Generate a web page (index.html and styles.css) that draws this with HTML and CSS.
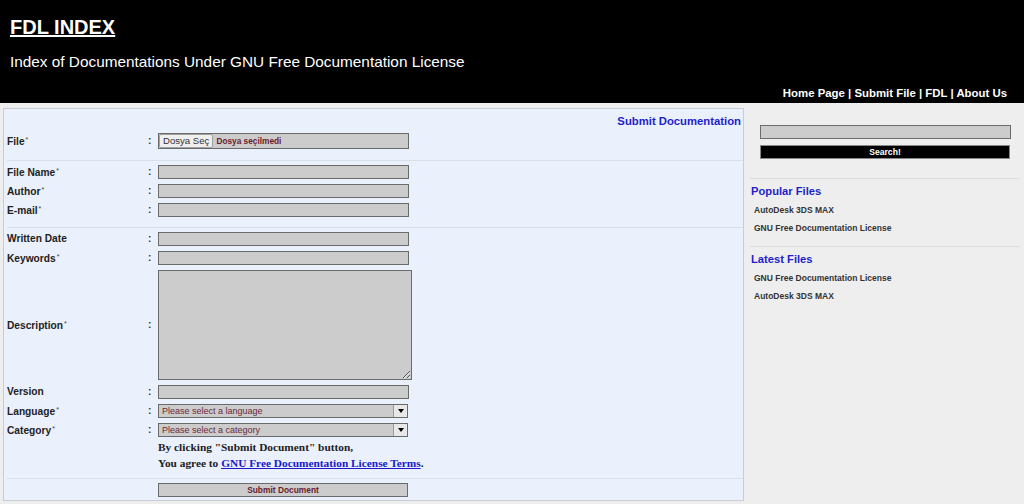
FILE: index.html
```html
<!DOCTYPE html>
<html lang="en">
<head>
<meta charset="utf-8">
<title>FDL INDEX - Submit Documentation</title>
<link rel="stylesheet" href="styles.css">
</head>
<body>
<header class="site-header">
  <h1 class="logo"><a href="#">FDL INDEX</a></h1>
  <p class="tagline">Index of Documentations Under GNU Free Documentation License</p>
  <nav class="topnav"><a href="#">Home Page</a> | <a href="#">Submit File</a> | <a href="#">FDL</a> | <a href="#">About Us</a></nav>
</header>
<div class="layout">
  <main class="panel">
    <h2 class="panel-title">Submit Documentation</h2>
    <form class="form">
      <div class="group">
        <div class="row">
          <label class="label">File<span class="req">*</span></label><span class="colon">:</span>
          <div class="filebox"><span class="filebtn">Dosya Seç</span><span class="filename">Dosya seçilmedi</span></div>
        </div>
      </div>
      <div class="group">
        <div class="row">
          <label class="label">File Name<span class="req">*</span></label><span class="colon">:</span>
          <input class="field" type="text">
        </div>
        <div class="row">
          <label class="label">Author<span class="req">*</span></label><span class="colon">:</span>
          <input class="field" type="text">
        </div>
        <div class="row">
          <label class="label">E-mail<span class="req">*</span></label><span class="colon">:</span>
          <input class="field" type="text">
        </div>
      </div>
      <div class="group group-main">
        <div class="row">
          <label class="label">Written Date</label><span class="colon">:</span>
          <input class="field" type="text">
        </div>
        <div class="row">
          <label class="label">Keywords<span class="req">*</span></label><span class="colon">:</span>
          <input class="field" type="text">
        </div>
        <div class="row">
          <label class="label">Description<span class="req">*</span></label><span class="colon">:</span>
          <textarea class="area"></textarea>
        </div>
        <div class="row">
          <label class="label">Version</label><span class="colon">:</span>
          <input class="field" type="text">
        </div>
        <div class="row">
          <label class="label">Language<span class="req">*</span></label><span class="colon">:</span>
          <div class="select"><span class="select-text">Please select a language</span><span class="select-arrow"><span class="tri"></span></span></div>
        </div>
        <div class="row">
          <label class="label">Category<span class="req">*</span></label><span class="colon">:</span>
          <div class="select"><span class="select-text">Please select a category</span><span class="select-arrow"><span class="tri"></span></span></div>
        </div>
        <div class="row note-row">
          <span></span><span></span>
          <p class="note">By clicking "Submit Document" button,<br>You agree to <a href="#">GNU Free Documentation License Terms</a>.</p>
        </div>
      </div>
      <div class="group group-last">
        <div class="row">
          <span></span><span></span>
          <button type="button" class="submit">Submit Document</button>
        </div>
      </div>
    </form>
  </main>
  <aside class="sidebar">
    <div class="search">
      <input class="search-input" type="text">
      <button type="button" class="search-btn">Search!</button>
    </div>
    <section class="side-block">
      <h3 class="side-title">Popular Files</h3>
      <ul class="side-list">
        <li><a href="#">AutoDesk 3DS MAX</a></li>
        <li><a href="#">GNU Free Documentation License</a></li>
      </ul>
    </section>
    <section class="side-block">
      <h3 class="side-title">Latest Files</h3>
      <ul class="side-list">
        <li><a href="#">GNU Free Documentation License</a></li>
        <li><a href="#">AutoDesk 3DS MAX</a></li>
      </ul>
    </section>
  </aside>
</div>
</body>
</html>
```
FILE: styles.css
```css
* { box-sizing: border-box; }
html, body { margin: 0; padding: 0; }
body {
  background: #eeeeee;
  font-family: "Liberation Sans", Arial, sans-serif;
  color: #222;
  width: 1024px;
  height: 504px;
  overflow: hidden;
}

/* Header */
.site-header {
  background: #000;
  color: #fff;
  height: 103px;
  padding: 15px 17px 0 10px;
}
.logo {
  margin: 0;
  font-size: 20px;
  line-height: 24px;
  font-weight: bold;
}
.logo a { color: #fff; text-decoration: underline; }
.tagline {
  margin: 14px 0 0;
  font-size: 15.35px;
  line-height: 18px;
}
.topnav {
  margin-top: 15px;
  text-align: right;
  font-size: 11.4px;
  line-height: 14px;
  font-weight: bold;
}
.topnav a { color: #fff; text-decoration: none; }

/* Layout */
.layout {
  display: flex;
  padding: 5px 0 0 3px;
}
.panel {
  width: 741px;
  background: #eaf0fc;
  border: 1px solid #c9ccd2;
  padding: 5px 0 0 3px;
}
.panel-title {
  margin: 0;
  text-align: right;
  padding-right: 2px;
  font-size: 11.3px;
  line-height: 14px;
  font-weight: bold;
  color: #1f1fcc;
}
.form { margin: 0; }
.group {
  display: flex;
  flex-direction: column;
  gap: 5px;
  padding: 5px 0 11px;
  border-bottom: 1px solid #dae0ea;
}
.group + .group { padding-top: 4px; padding-bottom: 10px; }
.group-main { padding-bottom: 7px !important; }
.group-last { border-bottom: 0; padding-bottom: 3px !important; }
.row {
  display: grid;
  grid-template-columns: 141px 10px auto;
  align-items: center;
}
.label {
  font-size: 10.2px;
  font-weight: bold;
  color: #222;
  line-height: 12px;
}
.req {
  font-size: 7px;
  font-weight: normal;
  vertical-align: 3px;
  margin-left: 1px;
  color: #444;
}
.colon {
  font-size: 10px;
  font-weight: bold;
  color: #333;
  line-height: 12px;
}
.field {
  display: block;
  width: 251px;
  height: 14px;
  margin: 0;
  padding: 0;
  background: #cccccc;
  border: 1px solid #6b6b6b;
  outline: none;
}
.filebox {
  display: flex;
  align-items: center;
  width: 251px;
  height: 16px;
  background: #cccccc;
  border: 1px solid #6b6b6b;
  padding-left: 0;
}
.filebtn {
  flex-shrink: 0;
  white-space: nowrap;
  height: 14px;
  padding: 0 3px 0 3px;
  background: #efefef;
  border: 1px solid #a0a0a0;
  border-radius: 2px;
  font-size: 9.6px;
  line-height: 12px;
  color: #333;
}
.filename {
  white-space: nowrap;
  margin-left: 3px;
  font-size: 8.3px;
  font-weight: bold;
  color: #6b1a2b;
}
.area {
  display: block;
  width: 254px;
  height: 110px;
  margin: 0;
  padding: 0;
  background: #cccccc;
  border: 1px solid #6b6b6b;
  outline: none;
  resize: both;
}
.select {
  display: flex;
  align-items: stretch;
  width: 250px;
  height: 14px;
  background: #cccccc;
  border: 1px solid #6b6b6b;
}
.select-text {
  flex: 1;
  padding-left: 3px;
  font-size: 9px;
  line-height: 12px;
  color: #6b2a3a;
}
.select-arrow {
  width: 14px;
  background: #e8e8e8;
  border-left: 1px solid #9a9a9a;
  display: flex;
  align-items: center;
  justify-content: center;
}
.tri {
  width: 0;
  height: 0;
  border-left: 3.5px solid transparent;
  border-right: 3.5px solid transparent;
  border-top: 4px solid #000;
}
.note-row { margin-top: -3px; }
.note {
  margin: 0;
  font-family: "Liberation Serif", "Times New Roman", serif;
  font-weight: bold;
  font-size: 11.35px;
  line-height: 16px;
  color: #222;
}
.note a { color: #1a1acc; text-decoration: underline; }
.submit {
  width: 250px;
  height: 14px;
  margin: 0;
  padding: 0;
  background: #cccccc;
  border: 1px solid #6b6b6b;
  font-family: "Liberation Sans", Arial, sans-serif;
  font-size: 8.4px;
  font-weight: bold;
  line-height: 12px;
  color: #6b1a2b;
}

/* Sidebar */
.sidebar {
  flex: 1;
  padding: 17px 4px 0 6px;
}
.search {
  display: flex;
  flex-direction: column;
  gap: 6px;
  padding: 0 0 19px 10px;
  border-bottom: 1px solid #dddddd;
}
.search-input {
  width: 251px;
  height: 14px;
  margin: 0;
  padding: 0;
  background: #cccccc;
  border: 1px solid #6b6b6b;
  outline: none;
}
.search-btn {
  width: 250px;
  height: 14px;
  margin: 0;
  padding: 0;
  background: #000;
  border: 1px solid #888;
  color: #fff;
  font-family: "Liberation Sans", Arial, sans-serif;
  font-size: 8.6px;
  font-weight: bold;
  line-height: 12px;
}
.side-block {
  padding: 5px 0 9px;
  border-bottom: 1px solid #dddddd;
}
.side-block:last-child { border-bottom: 0; }
.side-title {
  margin: 0 0 3px 1px;
  font-size: 11.2px;
  line-height: 14px;
  font-weight: bold;
  color: #1f1fcc;
}
.side-list {
  list-style: none;
  margin: 0;
  padding: 0 0 0 4px;
}
.side-list li {
  font-size: 8.5px;
  line-height: 18px;
  font-weight: bold;
}
.side-list a { color: #333; text-decoration: none; }
```
